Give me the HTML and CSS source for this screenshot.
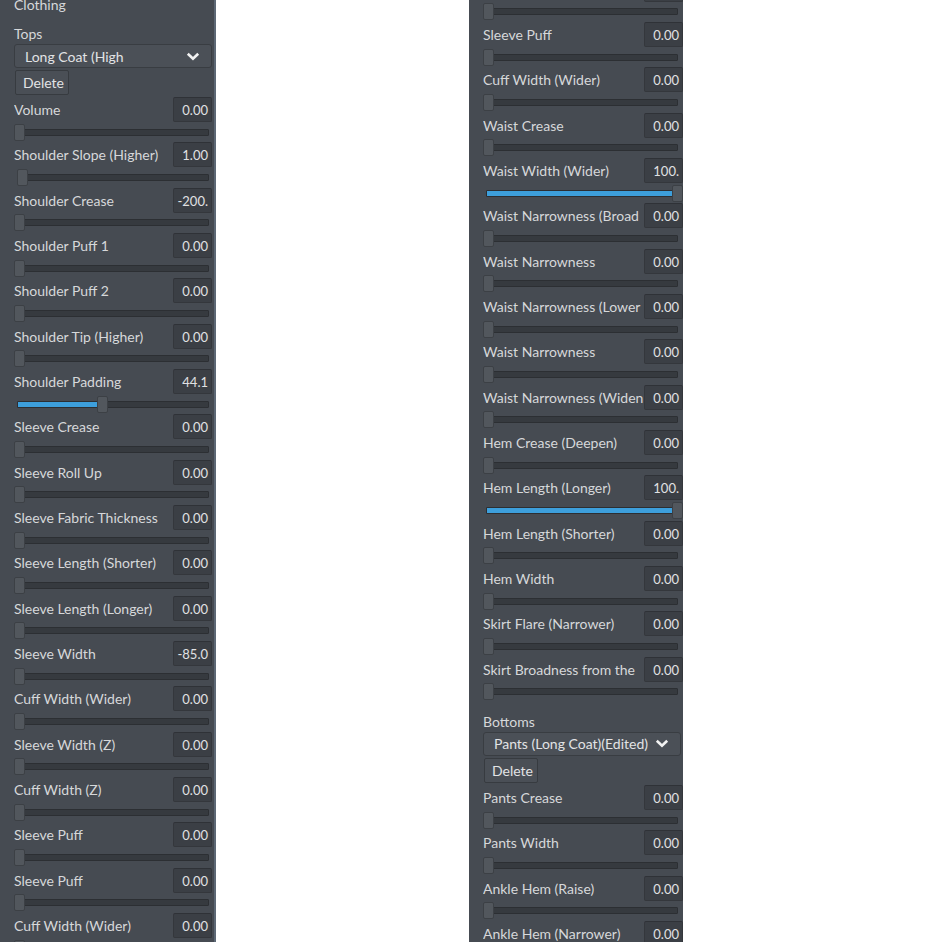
FILE: index.html
```html
<!DOCTYPE html>
<html>
<head>
<meta charset="utf-8">
<link rel="stylesheet" href="styles.css">
</head>
<body>
<div class="screen">
  <div class="panel panel-left">
    <div class="scroll scroll-left">
      <div class="heading">Clothing</div>
      <div class="section-label">Tops</div>
      <div class="dropdown"><span class="dropdown-text">Long Coat (High</span><svg class="chev" width="14" height="9" viewBox="0 0 14 9"><polyline points="1.8,1.8 7,6.8 12.2,1.8" fill="none" stroke="#f2f2f2" stroke-width="2.6"/></svg></div>
      <div class="button">Delete</div>

      <div class="row"><div class="row-head"><span class="label">Volume</span><span class="value">0.00</span></div><div class="slider"><div class="track"></div><div class="handle"></div></div></div>
      <div class="row"><div class="row-head"><span class="label">Shoulder Slope (Higher)</span><span class="value">1.00</span></div><div class="slider"><div class="track"></div><div class="handle" style="margin-left:3px"></div></div></div>
      <div class="row"><div class="row-head"><span class="label">Shoulder Crease</span><span class="value">-200.</span></div><div class="slider"><div class="track"></div><div class="handle"></div></div></div>
      <div class="row"><div class="row-head"><span class="label">Shoulder Puff 1</span><span class="value">0.00</span></div><div class="slider"><div class="track"></div><div class="handle"></div></div></div>
      <div class="row"><div class="row-head"><span class="label">Shoulder Puff 2</span><span class="value">0.00</span></div><div class="slider"><div class="track"></div><div class="handle"></div></div></div>
      <div class="row"><div class="row-head"><span class="label">Shoulder Tip (Higher)</span><span class="value">0.00</span></div><div class="slider"><div class="track"></div><div class="handle"></div></div></div>
      <div class="row"><div class="row-head"><span class="label">Shoulder Padding</span><span class="value">44.1</span></div><div class="slider"><div class="track"><div class="fill" style="width:81px"></div></div><div class="handle" style="margin-left:83px"></div></div></div>
      <div class="row"><div class="row-head"><span class="label">Sleeve Crease</span><span class="value">0.00</span></div><div class="slider"><div class="track"></div><div class="handle"></div></div></div>
      <div class="row"><div class="row-head"><span class="label">Sleeve Roll Up</span><span class="value">0.00</span></div><div class="slider"><div class="track"></div><div class="handle"></div></div></div>
      <div class="row"><div class="row-head"><span class="label">Sleeve Fabric Thickness</span><span class="value">0.00</span></div><div class="slider"><div class="track"></div><div class="handle"></div></div></div>
      <div class="row"><div class="row-head"><span class="label">Sleeve Length (Shorter)</span><span class="value">0.00</span></div><div class="slider"><div class="track"></div><div class="handle"></div></div></div>
      <div class="row"><div class="row-head"><span class="label">Sleeve Length (Longer)</span><span class="value">0.00</span></div><div class="slider"><div class="track"></div><div class="handle"></div></div></div>
      <div class="row"><div class="row-head"><span class="label">Sleeve Width</span><span class="value">-85.0</span></div><div class="slider"><div class="track"></div><div class="handle"></div></div></div>
      <div class="row"><div class="row-head"><span class="label">Cuff Width (Wider)</span><span class="value">0.00</span></div><div class="slider"><div class="track"></div><div class="handle"></div></div></div>
      <div class="row"><div class="row-head"><span class="label">Sleeve Width (Z)</span><span class="value">0.00</span></div><div class="slider"><div class="track"></div><div class="handle"></div></div></div>
      <div class="row"><div class="row-head"><span class="label">Cuff Width (Z)</span><span class="value">0.00</span></div><div class="slider"><div class="track"></div><div class="handle"></div></div></div>
      <div class="row"><div class="row-head"><span class="label">Sleeve Puff</span><span class="value">0.00</span></div><div class="slider"><div class="track"></div><div class="handle"></div></div></div>
      <div class="row"><div class="row-head"><span class="label">Sleeve Puff</span><span class="value">0.00</span></div><div class="slider"><div class="track"></div><div class="handle"></div></div></div>
      <div class="row"><div class="row-head"><span class="label">Cuff Width (Wider)</span><span class="value">0.00</span></div><div class="slider"><div class="track"></div><div class="handle"></div></div></div>
    </div>
  </div>

  <div class="panel panel-right">
    <div class="scroll scroll-right">
      <div class="row"><div class="row-head"><span class="label"></span><span class="value"></span></div><div class="slider"><div class="track"></div><div class="handle"></div></div></div>
      <div class="row"><div class="row-head"><span class="label">Sleeve Puff</span><span class="value">0.00</span></div><div class="slider"><div class="track"></div><div class="handle"></div></div></div>
      <div class="row"><div class="row-head"><span class="label">Cuff Width (Wider)</span><span class="value">0.00</span></div><div class="slider"><div class="track"></div><div class="handle"></div></div></div>
      <div class="row"><div class="row-head"><span class="label">Waist Crease</span><span class="value">0.00</span></div><div class="slider"><div class="track"></div><div class="handle"></div></div></div>
      <div class="row"><div class="row-head"><span class="label">Waist Width (Wider)</span><span class="value">100.</span></div><div class="slider"><div class="track"><div class="fill" style="width:186px"></div></div><div class="handle" style="margin-left:189px"></div></div></div>
      <div class="row"><div class="row-head"><span class="label">Waist Narrowness (Broad</span><span class="value">0.00</span></div><div class="slider"><div class="track"></div><div class="handle"></div></div></div>
      <div class="row"><div class="row-head"><span class="label">Waist Narrowness</span><span class="value">0.00</span></div><div class="slider"><div class="track"></div><div class="handle"></div></div></div>
      <div class="row"><div class="row-head"><span class="label">Waist Narrowness (Lower</span><span class="value">0.00</span></div><div class="slider"><div class="track"></div><div class="handle"></div></div></div>
      <div class="row"><div class="row-head"><span class="label">Waist Narrowness</span><span class="value">0.00</span></div><div class="slider"><div class="track"></div><div class="handle"></div></div></div>
      <div class="row"><div class="row-head"><span class="label">Waist Narrowness (Widen</span><span class="value">0.00</span></div><div class="slider"><div class="track"></div><div class="handle"></div></div></div>
      <div class="row"><div class="row-head"><span class="label">Hem Crease (Deepen)</span><span class="value">0.00</span></div><div class="slider"><div class="track"></div><div class="handle"></div></div></div>
      <div class="row"><div class="row-head"><span class="label">Hem Length (Longer)</span><span class="value">100.</span></div><div class="slider"><div class="track"><div class="fill" style="width:186px"></div></div><div class="handle" style="margin-left:189px"></div></div></div>
      <div class="row"><div class="row-head"><span class="label">Hem Length (Shorter)</span><span class="value">0.00</span></div><div class="slider"><div class="track"></div><div class="handle"></div></div></div>
      <div class="row"><div class="row-head"><span class="label">Hem Width</span><span class="value">0.00</span></div><div class="slider"><div class="track"></div><div class="handle"></div></div></div>
      <div class="row"><div class="row-head"><span class="label">Skirt Flare (Narrower)</span><span class="value">0.00</span></div><div class="slider"><div class="track"></div><div class="handle"></div></div></div>
      <div class="row"><div class="row-head"><span class="label">Skirt Broadness from the</span><span class="value">0.00</span></div><div class="slider"><div class="track"></div><div class="handle"></div></div></div>

      <div class="section-label">Bottoms</div>
      <div class="dropdown"><span class="dropdown-text">Pants (Long Coat)(Edited)</span><svg class="chev" width="14" height="9" viewBox="0 0 14 9"><polyline points="1.8,1.8 7,6.8 12.2,1.8" fill="none" stroke="#f2f2f2" stroke-width="2.6"/></svg></div>
      <div class="button">Delete</div>

      <div class="row"><div class="row-head"><span class="label">Pants Crease</span><span class="value">0.00</span></div><div class="slider"><div class="track"></div><div class="handle"></div></div></div>
      <div class="row"><div class="row-head"><span class="label">Pants Width</span><span class="value">0.00</span></div><div class="slider"><div class="track"></div><div class="handle"></div></div></div>
      <div class="row"><div class="row-head"><span class="label">Ankle Hem (Raise)</span><span class="value">0.00</span></div><div class="slider"><div class="track"></div><div class="handle"></div></div></div>
      <div class="row"><div class="row-head"><span class="label">Ankle Hem (Narrower)</span><span class="value">0.00</span></div><div class="slider"><div class="track"></div><div class="handle"></div></div></div>
    </div>
  </div>
</div>
</body>
</html>
```

FILE: styles.css
```css
html, body {
  margin: 0;
  padding: 0;
  background: #ffffff;
}

body {
  font-family: "Lato", "Noto Sans", sans-serif;
  font-size: 14px;
  color: #d6d8da;
}

.screen {
  display: flex;
  gap: 253px;
  height: 942px;
  overflow: hidden;
}

.panel {
  width: 214px;
  height: 942px;
  overflow: hidden;
  background: #464b52;
  box-sizing: border-box;
  flex: none;
}

.panel-left {
  width: 216px;
  border-right: 2px solid #5d6875;
}

.scroll {
  display: flex;
  flex-direction: column;
  padding: 0 2px 0 14px;
}

.scroll-left {
  margin-top: -5px;
}

.scroll-right {
  margin-top: -23.333px;
}

.scroll-right .value {
  margin-right: -2px;
}

.heading {
  height: 19px;
  line-height: 19px;
}

.section-label {
  height: 20px;
  line-height: 20px;
  padding-top: 10px;
}

.dropdown {
  height: 24px;
  box-sizing: border-box;
  display: flex;
  align-items: center;
  justify-content: space-between;
  padding: 0 11px 0 10px;
  background: #4b5057;
  border: 1px solid #393d42;
  border-radius: 3px;
  color: #e2e3e5;
}

.dropdown-text {
  white-space: nowrap;
  overflow: hidden;
}

.chev {
  flex: none;
  display: block;
}

.button {
  align-self: flex-start;
  margin: 2px 0 2px 1px;
  width: 54px;
  height: 25px;
  box-sizing: border-box;
  line-height: 23px;
  padding-left: 7px;
  background: #4a4f56;
  border: 1px solid #373b40;
  border-radius: 2px;
  color: #e2e3e5;
}

.row {
  display: flex;
  flex-direction: column;
  height: 45.333px;
  flex: none;
}

.row-head {
  height: 25px;
  display: flex;
  align-items: center;
  justify-content: space-between;
}

.label {
  flex: 1;
  min-width: 0;
  white-space: nowrap;
  overflow: hidden;
}

.value {
  flex: none;
  width: 39px;
  height: 25px;
  box-sizing: border-box;
  text-align: right;
  padding-right: 3px;
  line-height: 24px;
  font-size: 13px;
  background: #3b3f45;
  border: 1px solid #34373c;
  border-top-color: #2f3237;
  border-radius: 2px;
  color: #e0e1e3;
}

.slider {
  height: 20.333px;
  display: grid;
  align-items: center;
}

.track {
  grid-area: 1 / 1;
  margin: 0 3px;
  height: 7px;
  box-sizing: border-box;
  background: #363a3f;
  border: 1px solid #2c2f33;
  border-radius: 1px;
  display: flex;
}

.fill {
  height: 100%;
  background: #3d9fdc;
}

.handle {
  grid-area: 1 / 1;
  justify-self: start;
  width: 11px;
  height: 17px;
  box-sizing: border-box;
  background: #52575d;
  border: 1px solid #3c4045;
  border-radius: 2px;
}
```
